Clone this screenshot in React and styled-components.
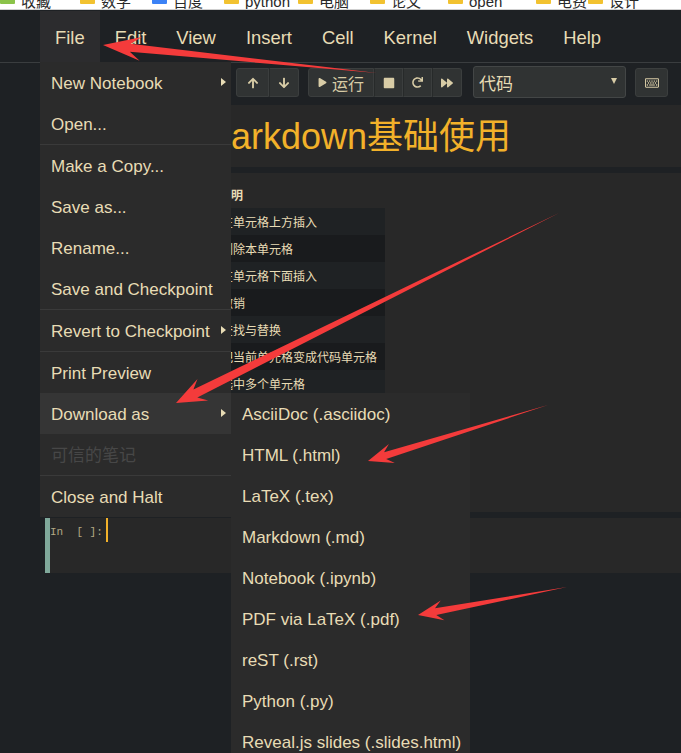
import React from 'react';
import styled, { createGlobalStyle } from 'styled-components';
import { FaArrowUp, FaArrowDown, FaPlay, FaStop, FaRedo, FaForward, FaRegKeyboard } from 'react-icons/fa';

const GlobalStyle = createGlobalStyle`
  html, body {
    margin: 0;
    padding: 0;
    background: #1e2124;
    overflow: hidden;
  }
  body {
    font-family: "Liberation Sans", "Noto Sans CJK SC", sans-serif;
  }
`;

const bookmarks = [
  { w: 80, icon: '#8bc34a', label: '收藏' },
  { w: 72, icon: '#f2c230', label: '数学' },
  { w: 72, icon: '#3b82f6', label: '百度' },
  { w: 74, icon: '#f2c230', label: 'python' },
  { w: 72, icon: '#f2c230', label: '电脑' },
  { w: 78, icon: '#f2c230', label: '论文' },
  { w: 88, icon: '#f2c230', label: 'open' },
  { w: 52, icon: '#f2c230', label: '电费' },
  { w: 90, icon: '#f2c230', label: '设计' },
];

const menus = ['File', 'Edit', 'View', 'Insert', 'Cell', 'Kernel', 'Widgets', 'Help'];

const fileMenu = [
  { label: 'New Notebook', sub: true },
  { label: 'Open...' },
  { divider: true },
  { label: 'Make a Copy...' },
  { label: 'Save as...' },
  { label: 'Rename...' },
  { label: 'Save and Checkpoint' },
  { divider: true },
  { label: 'Revert to Checkpoint', sub: true },
  { divider: true },
  { label: 'Print Preview' },
  { label: 'Download as', sub: true, active: true },
  { label: '可信的笔记', disabled: true },
  { divider: true },
  { label: 'Close and Halt' },
];

const downloadFormats = [
  'AsciiDoc (.asciidoc)',
  'HTML (.html)',
  'LaTeX (.tex)',
  'Markdown (.md)',
  'Notebook (.ipynb)',
  'PDF via LaTeX (.pdf)',
  'reST (.rst)',
  'Python (.py)',
  'Reveal.js slides (.slides.html)',
];

// first column sits under the open menu, only the description shows
const shortcuts = [
  '在单元格上方插入',
  '删除本单元格',
  '在单元格下面插入',
  '撤销',
  '查找与替换',
  '把当前单元格变成代码单元格',
  '选中多个单元格',
];

const arrows = [
  { from: [377, 73], to: [103, 45], head: 38, half: 12, neck: 4 },
  { from: [559, 213], to: [176, 403], head: 30, half: 12, neck: 4.5 },
  { from: [548, 405], to: [368, 461], head: 25, half: 10, neck: 3.5 },
  { from: [567, 587], to: [418, 615], head: 25, half: 10, neck: 3.5 },
];

const arrowPoints = ({ from, to, head, half, neck }) => {
  const dx = to[0] - from[0];
  const dy = to[1] - from[1];
  const len = Math.hypot(dx, dy);
  const ux = dx / len;
  const uy = dy / len;
  const nx = -uy;
  const ny = ux;
  const bx = to[0] - ux * head;
  const by = to[1] - uy * head;
  const kx = to[0] - ux * head * 0.72;
  const ky = to[1] - uy * head * 0.72;
  return [
    from,
    [kx + nx * neck, ky + ny * neck],
    [bx + nx * half, by + ny * half],
    to,
    [bx - nx * half, by - ny * half],
    [kx - nx * neck, ky - ny * neck],
  ]
    .map((p) => p.map((v) => v.toFixed(1)).join(','))
    .join(' ');
};

function App() {
  return (
    <Page>
      <GlobalStyle />
      <BookmarkBar>
        {bookmarks.map((b) => (
          <Bookmark key={b.label} $w={b.w}>
            <BookmarkIcon $color={b.icon} />
            <span>{b.label}</span>
          </Bookmark>
        ))}
      </BookmarkBar>

      <MenuBar>
        {menus.map((m) => (
          <MenuItem key={m} $open={m === 'File'}>{m}</MenuItem>
        ))}
      </MenuBar>

      <Toolbar>
        <BtnGroup>
          <ToolBtn $w={33}><FaArrowUp size={12} /></ToolBtn>
          <ToolBtn $w={30}><FaArrowDown size={12} /></ToolBtn>
        </BtnGroup>
        <BtnGroup>
          <ToolBtn $w={66}><FaPlay size={9} /><span>运行</span></ToolBtn>
          <ToolBtn $w={29}><FaStop size={12} /></ToolBtn>
          <ToolBtn $w={29}><FaRedo size={11} /></ToolBtn>
          <ToolBtn $w={30}><FaForward size={12} /></ToolBtn>
        </BtnGroup>
        <CellType>
          <span>代码</span>
          <SelectCaret />
        </CellType>
        <BtnGroup>
          <ToolBtn $w={33}><FaRegKeyboard size={14} /></ToolBtn>
        </BtnGroup>
      </Toolbar>

      <Notebook>
        <Cell $h={62}>
          <Heading>Markdown基础使用</Heading>
        </Cell>
        <Cell $h={339}>
          <ShortcutTable>
            <colgroup>
              <col style={{ width: 60 }} />
              <col style={{ width: 171 }} />
            </colgroup>
            <thead>
              <tr>
                <th />
                <th>说明</th>
              </tr>
            </thead>
            <tbody>
              {shortcuts.map((desc) => (
                <tr key={desc}>
                  <td />
                  <td>{desc}</td>
                </tr>
              ))}
            </tbody>
          </ShortcutTable>
        </Cell>
        <CodeCell>
          <Prompt>In  [ ]:</Prompt>
          <Cursor />
        </CodeCell>
      </Notebook>

      <Dropdown>
        {fileMenu.map((item, i) =>
          item.divider ? (
            <Divider key={`d${i}`} />
          ) : (
            <DropItem key={item.label} $active={item.active} $disabled={item.disabled}>
              {item.label}
              {item.sub && <Caret />}
              {item.active && (
                <SubMenu>
                  {downloadFormats.map((f) => (
                    <DropItem key={f}>{f}</DropItem>
                  ))}
                </SubMenu>
              )}
            </DropItem>
          )
        )}
      </Dropdown>

      <Overlay width="681" height="753" viewBox="0 0 681 753">
        {arrows.map((a, i) => (
          <polygon key={i} points={arrowPoints(a)} fill="#f43b3b" />
        ))}
      </Overlay>
    </Page>
  );
}

export default App;

const Page = styled.div`
  position: relative;
  width: 681px;
  height: 753px;
  overflow: hidden;
  background: #1e2124;
`;

const BookmarkBar = styled.div`
  display: flex;
  height: 9px;
  background: #ffffff;
  border-bottom: 1px solid #cfcfcf;
  overflow: hidden;
`;

const Bookmark = styled.div`
  flex: 0 0 ${(p) => p.$w}px;
  display: flex;
  align-items: flex-end;
  gap: 6px;
  height: 9px;
  font-size: 15px;
  line-height: 1;
  color: #2a2a2a;
  white-space: nowrap;
`;

const BookmarkIcon = styled.i`
  width: 15px;
  height: 10px;
  margin-bottom: 5px;
  background: ${(p) => p.$color};
  border-radius: 1px;
`;

const MenuBar = styled.div`
  display: flex;
  height: 52px;
  padding-left: 40px;
  background: #1e2124;
  border-bottom: 1px solid #3a3d3f;
`;

const MenuItem = styled.div`
  display: flex;
  align-items: center;
  margin-top: 1px;
  padding: 3px 15px 0;
  font-size: 18.4px;
  color: #e8dcb5;
  background: ${(p) => (p.$open ? '#2c2c2e' : 'transparent')};
`;

const Toolbar = styled.div`
  display: flex;
  align-items: flex-start;
  height: 42px;
  box-sizing: border-box;
  padding: 5px 0 0 236px;
  gap: 9px;
  background: #1e2124;
`;

const BtnGroup = styled.div`
  display: flex;
`;

const ToolBtn = styled.button`
  width: ${(p) => p.$w}px;
  height: 29px;
  padding: 0;
  display: flex;
  align-items: center;
  justify-content: center;
  gap: 5px;
  background: #303333;
  border: 1px solid #3b3e3e;
  color: #d8cca6;
  font-family: "Liberation Sans", "Noto Sans CJK SC", sans-serif;
  font-size: 16px;

  & + & {
    border-left-color: #272a2a;
  }
  &:first-child {
    border-radius: 3px 0 0 3px;
  }
  &:last-child {
    border-radius: 0 3px 3px 0;
  }
  &:only-child {
    border-radius: 3px;
  }
`;

const CellType = styled.div`
  width: 153px;
  height: 32px;
  box-sizing: border-box;
  margin: -2px 0 0 2px;
  padding: 0 8px 0 5px;
  display: flex;
  align-items: center;
  justify-content: space-between;
  background: #303333;
  border: 1px solid #434646;
  border-radius: 3px;
  font-size: 17px;
  color: #e8dcb5;
`;

const SelectCaret = styled.i`
  margin-top: -3px;
  border-top: 6px solid #d8cca6;
  border-left: 3px solid transparent;
  border-right: 3px solid transparent;
`;

const Notebook = styled.div`
  display: flex;
  flex-direction: column;
  gap: 6px;
  padding-left: 45px;
`;

const Cell = styled.div`
  height: ${(p) => p.$h}px;
  background: #282828;
`;

const Heading = styled.h1`
  margin: 0;
  padding: 2px 0 0 156px;
  font-size: 36px;
  font-weight: normal;
  line-height: 60px;
  color: #f2b12a;
  white-space: nowrap;
`;

const ShortcutTable = styled.table`
  margin: 7px 0 0 108px;
  border-collapse: collapse;
  table-layout: fixed;
  font-size: 12px;
  color: #e8dcb5;

  th {
    height: 28px;
    padding: 0 8px 0 6px;
    text-align: left;
    font-weight: bold;
  }
  td {
    height: 27px;
    padding: 0 8px;
    white-space: nowrap;
  }
  tbody tr:nth-child(odd) {
    background: #1f2224;
  }
  tbody tr:nth-child(even) {
    background: #191b1d;
  }
`;

const CodeCell = styled.div`
  display: flex;
  align-items: flex-start;
  height: 55px;
  background: #282828;
  border-left: 5px solid #7fa89a;
`;

const Prompt = styled.pre`
  width: 56px;
  margin: 0;
  padding-top: 7px;
  font-family: "Liberation Mono", monospace;
  font-size: 11px;
  line-height: 14px;
  color: #b3a884;
`;

const Cursor = styled.i`
  width: 2px;
  height: 24px;
  background: #f2b12a;
`;

const Dropdown = styled.div`
  position: absolute;
  top: 62px;
  left: 40px;
  width: 191px;
  background: #2b2b2b;
  z-index: 5;
`;

const DropItem = styled.div`
  position: relative;
  height: 41px;
  line-height: 43px;
  padding-left: 11px;
  font-size: 17px;
  white-space: nowrap;
  color: ${(p) => (p.$disabled ? '#474747' : '#e8dcb5')};
  background: ${(p) => (p.$active ? '#353535' : 'transparent')};
`;

const Divider = styled.div`
  height: 1px;
  background: #3a3a3a;
`;

const Caret = styled.i`
  position: absolute;
  top: 16px;
  right: 5px;
  border-left: 5px solid #e8dcb5;
  border-top: 4px solid transparent;
  border-bottom: 4px solid transparent;
`;

const SubMenu = styled.div`
  position: absolute;
  top: 0;
  left: 100%;
  width: 239px;
  background: #2b2b2b;
`;

const Overlay = styled.svg`
  position: absolute;
  top: 0;
  left: 0;
  z-index: 10;
  pointer-events: none;
`;
